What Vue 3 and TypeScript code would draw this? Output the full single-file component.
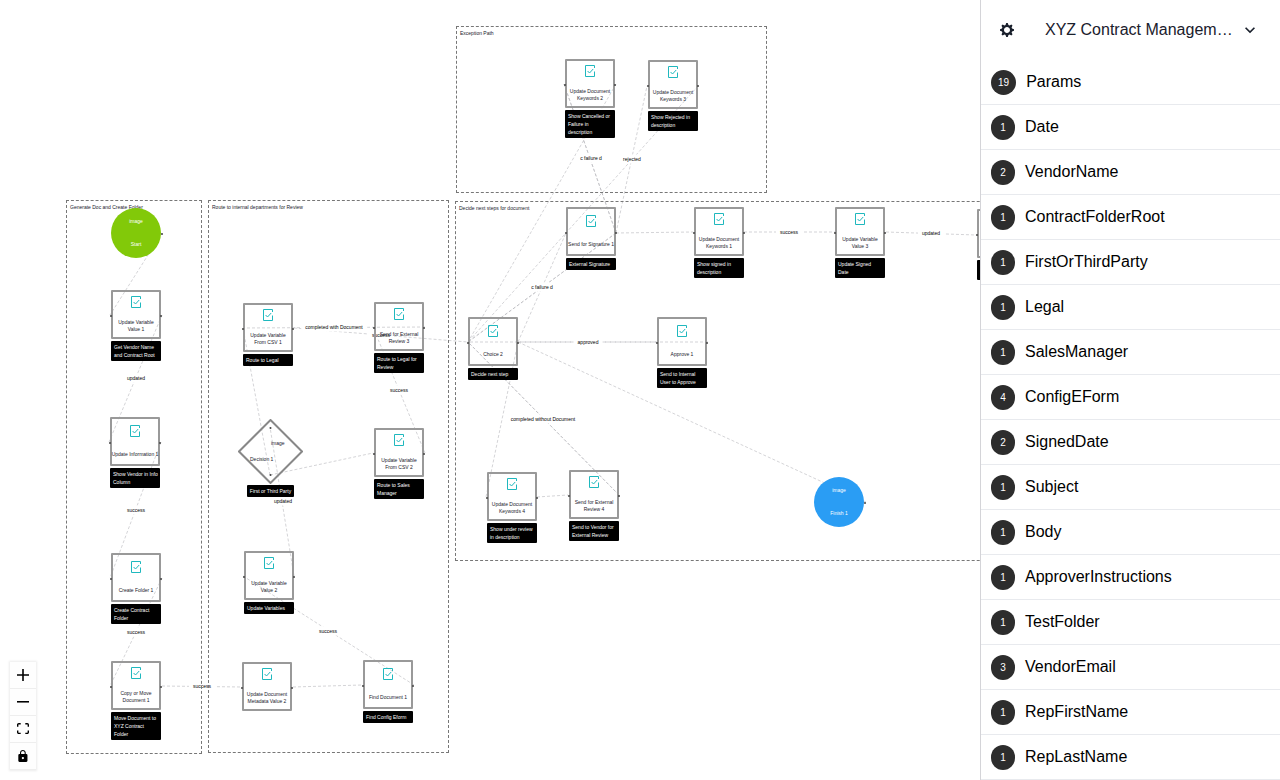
<script setup lang="ts">
interface FlowNode {
  x: number
  y: number
  title: string
  note?: string
}
interface Circle {
  x: number
  y: number
  title: string
  kind: 'start' | 'finish'
}
interface Group {
  x: number
  y: number
  w: number
  h: number
  title: string
}
type Edge = [number, number, number, number]

const groups: Group[] = [
  { x: 66, y: 200, w: 136, h: 554, title: 'Generate Doc and Create Folder' },
  { x: 208, y: 200, w: 241, h: 553, title: 'Route to internal departments for Review' },
  { x: 456, y: 26, w: 311, h: 167, title: 'Exception Path' },
  { x: 455, y: 201, w: 620, h: 360, title: 'Decide next steps for document' },
]

const nodes: FlowNode[] = [
  { x: 111, y: 290, title: 'Update Variable\nValue 1', note: 'Get Vendor Name\nand Contract Root' },
  { x: 110, y: 417, title: 'Update Information 1', note: 'Show Vendor in Info\nColumn' },
  { x: 111, y: 553, title: 'Create Folder 1', note: 'Create Contract\nFolder' },
  { x: 111, y: 661, title: 'Copy or Move\nDocument 1', note: 'Move Document to\nXYZ Contract\nFolder' },
  { x: 243, y: 303, title: 'Update Variable\nFrom CSV 1', note: 'Route to Legal' },
  { x: 374, y: 302, title: 'Send for External\nReview 3', note: 'Route to Legal for\nReview' },
  { x: 374, y: 428, title: 'Update Variable\nFrom CSV 2', note: 'Route to Sales\nManager' },
  { x: 244, y: 551, title: 'Update Variable\nValue 2', note: 'Update Variables' },
  { x: 242, y: 662, title: 'Update Document\nMetadata Value 2' },
  { x: 363, y: 660, title: 'Find Document 1', note: 'Find Config Eform' },
  { x: 565, y: 59, title: 'Update Document\nKeywords 2', note: 'Show Cancelled or\nFailure in\ndescription' },
  { x: 648, y: 60, title: 'Update Document\nKeywords 3', note: 'Show Rejected in\ndescription' },
  { x: 566, y: 207, title: 'Send for Signature 1', note: 'External Signature' },
  { x: 694, y: 207, title: 'Update Document\nKeywords 1', note: 'Show signed in\ndescription' },
  { x: 835, y: 207, title: 'Update Variable\nValue 3', note: 'Update Signed\nDate' },
  { x: 977, y: 209, title: 'Update\nValue', note: 'Update\nMetadata' },
  { x: 468, y: 317, title: 'Choice 2', note: 'Decide next step' },
  { x: 657, y: 317, title: 'Approve 1', note: 'Send to Internal\nUser to Approve' },
  { x: 487, y: 472, title: 'Update Document\nKeywords 4', note: 'Show under review\nin description' },
  { x: 569, y: 470, title: 'Send for External\nReview 4', note: 'Send to Vendor for\nExternal Review' },
]

const circles: Circle[] = [
  { x: 111, y: 208, title: 'Start', kind: 'start' },
  { x: 814, y: 477, title: 'Finish 1', kind: 'finish' },
]

const edges: Edge[] = [
  [162, 233, 110, 315],
  [162, 315, 109, 442],
  [161, 442, 110, 578],
  [162, 578, 110, 686],
  [162, 686, 242, 687],
  [293, 687, 362, 685],
  [414, 685, 243, 576],
  [294, 576, 270, 427],
  [270, 475, 243, 328],
  [270, 475, 373, 453],
  [425, 327, 243, 328],
  [294, 328, 468, 342],
  [425, 453, 373, 327],
  [708, 342, 468, 342],
  [518, 342, 656, 342],
  [616, 233, 468, 342],
  [616, 233, 468, 342],
  [616, 233, 564, 84],
  [616, 233, 564, 84],
  [616, 233, 647, 86],
  [616, 84, 468, 342],
  [698, 86, 468, 342],
  [518, 342, 566, 233],
  [518, 342, 486, 497],
  [537, 497, 568, 495],
  [619, 495, 468, 342],
  [619, 495, 468, 342],
  [518, 342, 866, 502],
  [616, 233, 693, 232],
  [744, 232, 835, 232],
  [886, 232, 976, 235],
]

const labels: { x: number; y: number; text: string }[] = [
  { x: 136, y: 378, text: 'updated' },
  { x: 136, y: 510, text: 'success' },
  { x: 136, y: 632, text: 'success' },
  { x: 202, y: 686, text: 'success' },
  { x: 328, y: 631, text: 'success' },
  { x: 283, y: 501, text: 'updated' },
  { x: 334, y: 327, text: 'completed with Document' },
  { x: 381, y: 335, text: 'success' },
  { x: 399, y: 390, text: 'success' },
  { x: 588, y: 342, text: 'approved' },
  { x: 542, y: 287, text: 'c failure d' },
  { x: 591, y: 158, text: 'c failure d' },
  { x: 632, y: 159, text: 'rejected' },
  { x: 543, y: 419, text: 'completed without Document' },
  { x: 789, y: 232, text: 'success' },
  { x: 931, y: 233, text: 'updated' },
]

const params: [number, string][] = [
  [19, 'Params'],
  [1, 'Date'],
  [2, 'VendorName'],
  [1, 'ContractFolderRoot'],
  [1, 'FirstOrThirdParty'],
  [1, 'Legal'],
  [1, 'SalesManager'],
  [4, 'ConfigEForm'],
  [2, 'SignedDate'],
  [1, 'Subject'],
  [1, 'Body'],
  [1, 'ApproverInstructions'],
  [1, 'TestFolder'],
  [3, 'VendorEmail'],
  [1, 'RepFirstName'],
  [1, 'RepLastName'],
]

const at = (p: { x: number; y: number }) => ({ left: `${p.x}px`, top: `${p.y}px` })
</script>

<template>
  <div class="app">
    <main class="canvas">
      <svg class="edges" aria-hidden="true">
        <line v-for="(e, i) in edges" :key="i" :x1="e[0]" :y1="e[1]" :x2="e[2]" :y2="e[3]" />
      </svg>
      <span v-for="(l, i) in labels" :key="'l' + i" class="edge-label" :style="at(l)">{{ l.text }}</span>

      <section
        v-for="g in groups"
        :key="g.title"
        class="group"
        :style="{ ...at(g), width: `${g.w}px`, height: `${g.h}px` }"
      >
        {{ g.title }}
      </section>

      <div v-for="n in nodes" :key="n.x + '-' + n.y" class="node" :style="at(n)">
        <div class="box" :class="{ single: !n.title.includes('\n') }">
          <i class="dot left"></i>
          <i class="dot right"></i>
          <svg class="task" viewBox="0 0 10 12" aria-hidden="true">
            <path d="M9.5 3V.5H.5v11h9V6.5" />
            <path d="M2.6 6l1.9 2L8.2 4" />
          </svg>
          <span class="title">{{ n.title }}</span>
        </div>
        <div v-if="n.note" class="note">{{ n.note }}</div>
      </div>

      <div v-for="c in circles" :key="c.title" class="circle" :class="c.kind" :style="at(c)">
        <i class="dot right"></i>
        <span>image</span>
        <span>{{ c.title }}</span>
      </div>

      <div class="decision" :style="at({ x: 238, y: 419 })">
        <svg viewBox="0 0 65 65" aria-hidden="true">
          <path d="M32.5 1L64 32.5L32.5 64L1 32.5Z" />
          <circle cx="32.5" cy="9" r="1" />
          <circle cx="32.5" cy="56" r="1" />
        </svg>
        <span class="decision-image">image</span>
        <span class="decision-title">Decision 1</span>
        <div class="note">First or Third Party</div>
      </div>

      <div class="controls">
        <button type="button" aria-label="Zoom in">
          <svg viewBox="0 0 32 32"><path d="M32 18.133H18.133V32h-4.266V18.133H0v-4.266h13.867V0h4.266v13.867H32z" /></svg>
        </button>
        <button type="button" aria-label="Zoom out">
          <svg viewBox="0 0 32 5"><path d="M0 0h32v4.2H0z" /></svg>
        </button>
        <button type="button" aria-label="Fit view">
          <svg viewBox="0 0 32 30"><path d="M3.692 4.63c0-.53.4-.938.939-.938h5.215V0H4.708C2.13 0 0 2.054 0 4.63v5.216h3.692V4.631zM27.354 0h-5.2v3.692h5.17c.53 0 .984.4.984.939v5.215H32V4.631A4.624 4.624 0 0 0 27.354 0zm.954 24.83c0 .532-.4.94-.939.94h-5.215v3.768h5.215c2.577 0 4.631-2.13 4.631-4.707v-5.139h-3.692v5.139zm-23.677.94a.919.919 0 0 1-.939-.94v-5.138H0v5.139c0 2.577 2.13 4.707 4.708 4.707h5.138V25.77H4.631z" /></svg>
        </button>
        <button type="button" aria-label="Toggle interactivity">
          <svg viewBox="0 0 25 32"><path d="M21.333 10.667H19.81V7.619C19.81 3.429 16.38 0 12.19 0 8 0 4.571 3.429 4.571 7.619v3.048H3.048A3.056 3.056 0 0 0 0 13.714v15.238A3.056 3.056 0 0 0 3.048 32h18.285a3.056 3.056 0 0 0 3.048-3.048V13.714a3.056 3.056 0 0 0-3.048-3.047zM12.19 24.533a3.056 3.056 0 0 1-3.047-3.047 3.056 3.056 0 0 1 3.047-3.048 3.056 3.056 0 0 1 3.048 3.048 3.056 3.056 0 0 1-3.048 3.047zm4.724-13.866H7.467V7.619c0-2.59 2.133-4.724 4.723-4.724 2.591 0 4.724 2.133 4.724 4.724v3.048z" /></svg>
        </button>
      </div>
    </main>

    <aside class="sidebar">
      <header class="bar">
        <button class="gear" type="button" aria-label="Settings">
          <svg viewBox="0 0 14 14"><path fill-rule="evenodd" d="M14,7.77 L14,6.17 L12.06,5.53 L11.61,4.44 L12.49,2.6 L11.36,1.47 L9.55,2.38 L8.46,1.93 L7.77,0.01 L6.17,0.01 L5.54,1.95 L4.43,2.4 L2.59,1.52 L1.46,2.65 L2.37,4.46 L1.92,5.55 L0,6.23 L0,7.82 L1.94,8.46 L2.39,9.55 L1.51,11.39 L2.64,12.52 L4.45,11.61 L5.54,12.06 L6.23,13.98 L7.82,13.98 L8.45,12.04 L9.56,11.59 L11.4,12.47 L12.53,11.34 L11.61,9.53 L12.08,8.44 L14,7.75 L14,7.77 Z M7,10 C5.34,10 4,8.66 4,7 C4,5.34 5.34,4 7,4 C8.66,4 10,5.34 10,7 C10,8.66 8.66,10 7,10 Z" /></svg>
        </button>
        <div class="picker">
          <select aria-label="Workflow">
            <option>XYZ Contract Management</option>
          </select>
          <svg viewBox="0 0 24 24" aria-hidden="true"><path d="M16.59 8.59L12 13.17 7.41 8.59 6 10l6 6 6-6z" /></svg>
        </div>
      </header>
      <ul class="params">
        <li v-for="[count, name] in params" :key="name">
          <button type="button">
            <span class="count">{{ count }}</span>
            <span>{{ name }}</span>
          </button>
        </li>
      </ul>
    </aside>
  </div>
</template>

<style>
body {
  background: #fff;
}
</style>

<style scoped>
.app,
.app * {
  box-sizing: border-box;
}
.app {
  display: flex;
  height: 100vh;
  overflow: hidden;
  font-family: "Liberation Sans", Arial, sans-serif;
  font-size: 16px;
  color: #000;
}
.canvas {
  position: relative;
  flex: 1;
  min-width: 0;
  overflow: hidden;
  font-size: 5px;
  line-height: 7px;
  color: #1a202c;
}
.edges {
  position: absolute;
  inset: 0;
  width: 100%;
  height: 100%;
}
.edges line {
  stroke: #b1b1b7;
  stroke-opacity: 0.55;
  stroke-width: 1;
  stroke-dasharray: 3 2;
}
.edge-label {
  position: absolute;
  transform: translate(-50%, -50%);
  padding: 1px 4px;
  background: #fff;
  color: #000;
  white-space: nowrap;
}
.group {
  position: absolute;
  padding: 3px;
  border: 1px dashed #777;
  white-space: nowrap;
}
.node {
  position: absolute;
  width: 50px;
}
.box {
  position: relative;
  display: flex;
  flex-direction: column;
  align-items: center;
  justify-content: center;
  gap: 11px;
  height: 49px;
  padding-bottom: 1px;
  border: 2px solid #999;
  border-radius: 1px;
}
.box.single {
  gap: 14px;
}
.title {
  text-align: center;
  white-space: pre;
}
.task {
  flex: none;
  width: 10px;
  height: 12px;
  fill: none;
  stroke: #1fb8be;
}
.note {
  margin-top: 2px;
  padding: 2px 3px;
  border-radius: 1px;
  background: #000;
  color: #fff;
  line-height: 8px;
  white-space: pre;
}
.dot {
  position: absolute;
  top: 50%;
  width: 2px;
  height: 2px;
  border-radius: 50%;
  background: #444;
}
.dot.left {
  left: -3px;
}
.dot.right {
  right: -3px;
}
.circle {
  position: absolute;
  display: flex;
  flex-direction: column;
  align-items: center;
  gap: 16px;
  width: 50px;
  height: 50px;
  padding-top: 10px;
  border-radius: 50%;
  color: #fff;
}
.circle .dot.right {
  right: -2px;
}
.circle.start {
  background: #82c909;
}
.circle.finish {
  background: #2a9df4;
}
.decision {
  position: absolute;
  width: 65px;
  height: 65px;
}
.decision svg {
  display: block;
  fill: none;
  stroke: #888;
  stroke-width: 2;
}
.decision circle {
  fill: #444;
  stroke: none;
}
.decision-image,
.decision-title {
  position: absolute;
}
.decision-image {
  top: 21px;
  left: 33px;
}
.decision-title {
  top: 37px;
  left: 12px;
}
.decision .note {
  width: fit-content;
  margin: 1px auto 0;
}
.controls {
  position: absolute;
  left: 10px;
  bottom: 10px;
  display: flex;
  flex-direction: column;
  box-shadow: 0 0 2px 1px rgba(0, 0, 0, 0.08);
}
.controls button {
  display: flex;
  align-items: center;
  justify-content: center;
  width: 26px;
  height: 27px;
  padding: 0;
  border: 0;
  border-bottom: 1px solid #eee;
  background: #fefefe;
}
.controls svg {
  width: 12px;
  max-height: 12px;
}
.sidebar {
  flex: none;
  width: 300px;
  border-left: 1px solid #d4d4d8;
  background: #fff;
}
.bar {
  display: flex;
  align-items: center;
  gap: 8px;
  height: 60px;
  padding: 0 12px 0 6px;
}
.gear {
  display: flex;
  align-items: center;
  justify-content: center;
  width: 40px;
  height: 40px;
  padding: 0;
  border: 0;
  background: none;
  fill: #1a202c;
}
.gear svg {
  width: 14px;
  height: 14px;
}
.picker {
  position: relative;
  flex: 1;
  min-width: 0;
}
.picker select {
  display: block;
  width: 100%;
  height: 40px;
  padding: 0 32px 2px 10px;
  border: 0;
  appearance: none;
  background: transparent;
  font: inherit;
  color: #1a202c;
  text-overflow: ellipsis;
}
.picker svg {
  position: absolute;
  top: 10px;
  right: 8px;
  width: 20px;
  height: 20px;
  fill: #1a202c;
  pointer-events: none;
}
.params {
  margin: 0;
  padding: 0;
  list-style: none;
}
.params button {
  display: flex;
  align-items: center;
  gap: 10px;
  width: 100%;
  height: 45px;
  padding: 0 10px;
  border: 0;
  border-bottom: 1px solid #e8eaee;
  background: none;
  font: inherit;
  color: #000;
  text-align: left;
}
.count {
  min-width: 24px;
  height: 25px;
  padding: 0 7px;
  border-radius: 13px;
  background: #2d2d2d;
  color: #fff;
  font-size: 10px;
  line-height: 25px;
  text-align: center;
}
</style>
